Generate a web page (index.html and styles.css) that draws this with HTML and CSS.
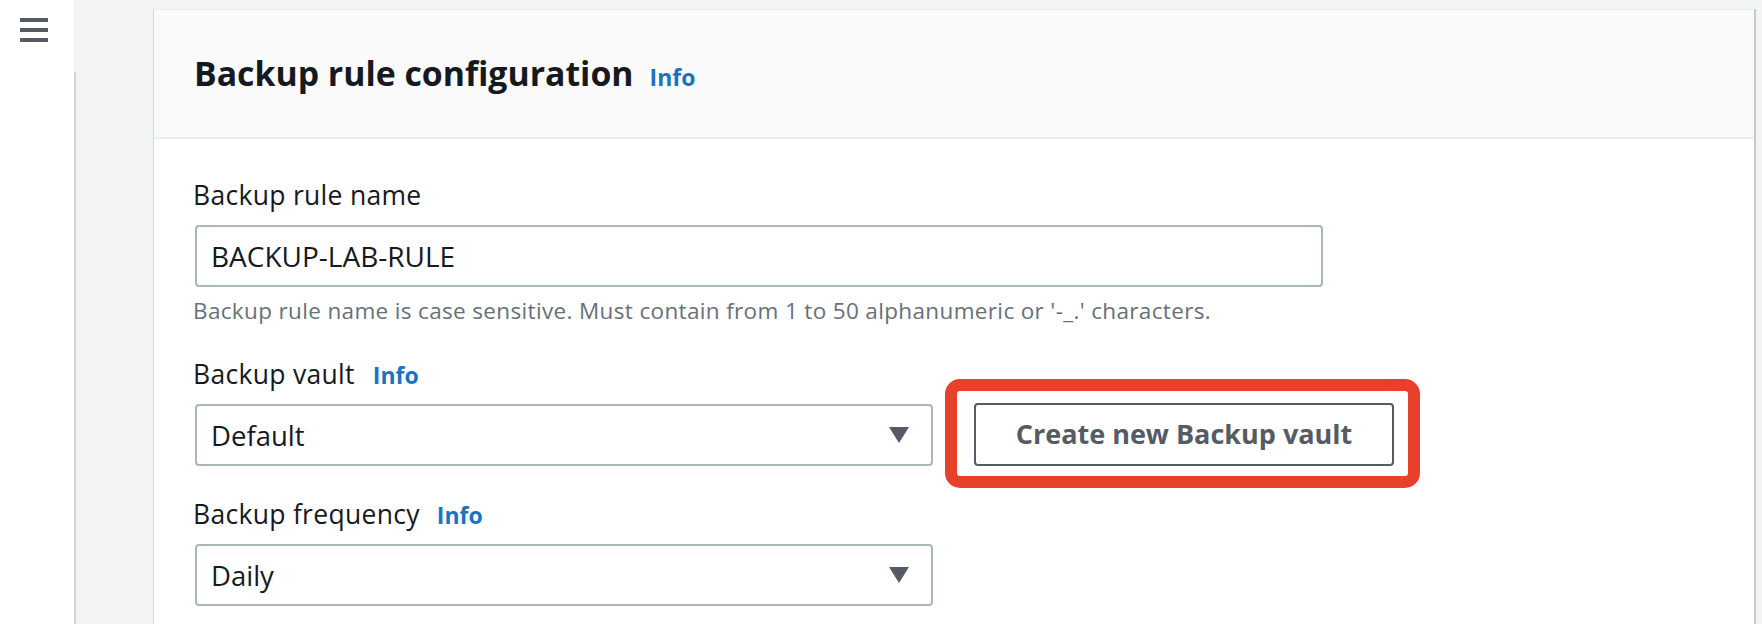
FILE: index.html
```html
<!DOCTYPE html>
<html lang="en">
<head>
<meta charset="utf-8">
<title>Backup rule configuration</title>
<link rel="stylesheet" href="styles.css">
</head>
<body>
<div class="app">
  <nav class="nav">
    <div class="nav-top">
      <button class="menu-btn" aria-label="Open navigation">
        <svg width="28" height="24" viewBox="0 0 28 24" aria-hidden="true">
          <rect x="0" y="0" width="28" height="4" fill="#545b64"/>
          <rect x="0" y="10" width="28" height="4" fill="#545b64"/>
          <rect x="0" y="20" width="28" height="4" fill="#545b64"/>
        </svg>
      </button>
    </div>
    <div class="nav-rest"></div>
  </nav>
  <main class="main">
    <section class="card">
      <header class="card-header">
        <h2 class="title">Backup rule configuration<a class="info info-title" href="#">Info</a></h2>
      </header>
      <div class="card-body">
        <div class="field field-first">
          <label class="label">Backup rule name</label>
          <div class="input">BACKUP-LAB-RULE</div>
          <p class="constraint">Backup rule name is case sensitive. Must contain from 1 to 50 alphanumeric or '-_.' characters.</p>
        </div>
        <div class="field field-vault">
          <label class="label">Backup vault<a class="info" href="#">Info</a></label>
          <div class="row">
            <div class="select">
              <span class="select-value">Default</span>
              <svg class="caret" width="20" height="16" viewBox="0 0 20 16" aria-hidden="true"><polygon points="0,0 20,0 10,16" fill="#545b64"/></svg>
            </div>
            <div class="highlight-wrap">
              <button class="btn">Create new Backup vault</button>
              <span class="highlight"></span>
            </div>
          </div>
        </div>
        <div class="field field-freq">
          <label class="label">Backup frequency<a class="info info-freq" href="#">Info</a></label>
          <div class="select">
            <span class="select-value">Daily</span>
            <svg class="caret" width="20" height="16" viewBox="0 0 20 16" aria-hidden="true"><polygon points="0,0 20,0 10,16" fill="#545b64"/></svg>
          </div>
        </div>
      </div>
    </section>
  </main>
</div>
</body>
</html>
```

FILE: styles.css
```css
* { box-sizing: border-box; }

html, body {
  margin: 0;
  padding: 0;
  height: 100%;
  overflow: hidden;
}

body {
  background: #f2f3f3;
  font-family: "Open Sans", "Noto Sans", sans-serif;
  color: #16191f;
}

.app {
  display: flex;
  height: 624px;
}

.nav {
  width: 76px;
  flex: 0 0 76px;
  display: flex;
  flex-direction: column;
}

.nav-top {
  width: 74px;
  height: 72px;
  background: #ffffff;
  padding: 18px 0 0 20px;
}

.menu-btn {
  display: block;
  border: 0;
  padding: 0;
  margin: 0;
  background: transparent;
  width: 28px;
  height: 24px;
}

.menu-btn svg { display: block; }

.nav-rest {
  flex: 1;
  width: 76px;
  background: #ffffff;
  border-right: 2px solid #d3d7d8;
}

.main {
  flex: 1;
  padding: 9px 8px 0 78px;
  min-width: 0;
}

.card {
  background: #ffffff;
  border-top: 1px solid #eaeded;
  box-shadow: -1px 0 0 0 #d5dbdb, 2px 0 0 0 #c6cacd;
  min-height: 700px;
}

.card-header {
  background: #fafafa;
  border-bottom: 2px solid #eaeded;
  padding: 43px 41px 0;
  height: 129px;
}

.title {
  margin: 0;
  font-size: 33.8px;
  line-height: 40px;
  height: 40px;
  font-weight: 700;
  color: #16191f;
  text-indent: -1px;
  display: flex;
  align-items: baseline;
}

.info {
  color: #1a73bf;
  font-weight: 700;
  font-size: 23px;
  line-height: 22px;
  text-decoration: none;
  margin-left: 18px;
  text-indent: 0;
}

.info-title { margin-left: 16px; }
.info-freq { margin-left: 17px; }

.card-body {
  padding: 40px 41px 0;
}

.field-vault { margin-top: 33px; }
.field-freq { margin-top: 32px; }

.label {
  display: flex;
  align-items: baseline;
  font-size: 26.5px;
  letter-spacing: 0.3px;
  line-height: 32px;
  height: 32px;
  margin: 0 0 14px -2px;
  color: #16191f;
}

.label .info { letter-spacing: 0; }

.input {
  width: 1128px;
  height: 62px;
  border: 2px solid #aab7b8;
  border-radius: 4px;
  padding: 0 14px;
  font-size: 28px;
  display: flex;
  align-items: center;
  color: #16191f;
  background: #ffffff;
}

.constraint {
  margin: 10px 0 0 -2px;
  font-size: 22.5px;
  letter-spacing: 0.35px;
  line-height: 28px;
  height: 28px;
  color: #687078;
  white-space: nowrap;
}

.row {
  display: flex;
  align-items: flex-start;
  gap: 41px;
}

.select {
  width: 738px;
  height: 62px;
  border: 2px solid #aab7b8;
  border-radius: 4px;
  padding: 0 22px 0 14px;
  display: flex;
  align-items: center;
  justify-content: space-between;
  background: #ffffff;
}

.select-value {
  font-size: 27.5px;
  color: #16191f;
}

.caret { display: block; }

.highlight-wrap {
  position: relative;
}

.btn {
  display: block;
  width: 420px;
  height: 63px;
  border: 2px solid #545b64;
  border-radius: 4px;
  background: #ffffff;
  color: #545b64;
  font-family: "Open Sans", "Noto Sans", sans-serif;
  font-weight: 700;
  font-size: 27px;
  padding: 0 0 2px;
  margin: -1px 0 0;
}

.highlight {
  position: absolute;
  left: -29px;
  top: -25px;
  right: -26px;
  bottom: -22px;
  border: 12px solid #e8402b;
  border-radius: 15px;
  pointer-events: none;
}
```
